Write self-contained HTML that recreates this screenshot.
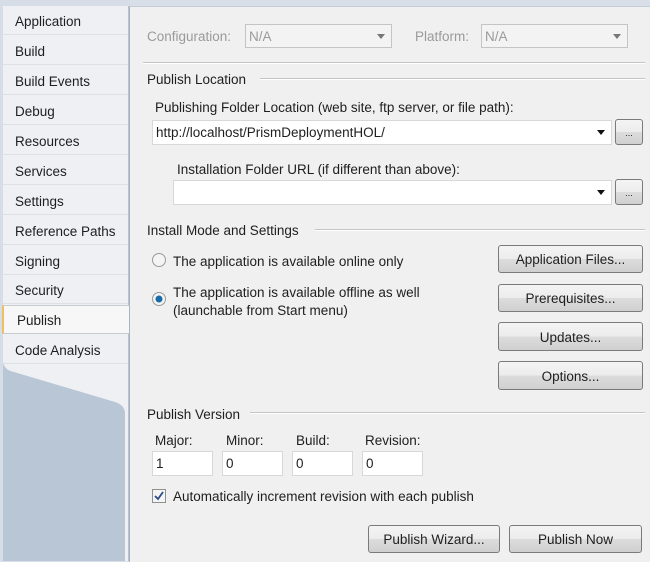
<!DOCTYPE html>
<html><head><style>
body{margin:0;width:650px;height:561px;overflow:hidden;background:#d9dfe8;font-family:"Liberation Sans",sans-serif;font-size:13.5px;color:#1e1e1e;position:relative}
.a{position:absolute;white-space:nowrap}
.tab{position:absolute;left:3px;width:125px;height:29px;border-bottom:1px solid #dde0e5;line-height:31px;padding-left:12px;box-sizing:border-box}
.panel{position:absolute;left:129px;top:6px;width:521px;height:555px;background:#f0f0f0;border-left:1px solid #a8b4c4;border-top:1px solid #c4ccd6}
.line{position:absolute;height:1px;background:#c4c4c4;border-bottom:1px solid #fff}
.box{position:absolute;background:#fff;border:1px solid #d8d8d8;box-sizing:border-box;line-height:24px;padding-left:3px}
.btn{position:absolute;border:1px solid #7a7a7a;border-radius:3px;background:linear-gradient(#f4f4f4,#ececec 50%,#dcdcdc 51%,#d0d0d0);box-sizing:border-box;text-align:center;font-size:13.5px}
.arr{position:absolute;right:6px;top:9px;width:0;height:0;border-left:4.5px solid transparent;border-right:4.5px solid transparent;border-top:5px solid #111}
.dis{color:#9a9a9a}
.t{margin-top:1px}
</style></head><body>
<svg class="a" style="left:0;top:0" width="130" height="561">
<rect x="0" y="0" width="130" height="561" fill="#d7dde6"/>
<path d="M3 6 H128 V561 H3 Z" fill="#eef0f4"/>
<path d="M3 362 Q4 370 14 372 L115 402 Q125 405 125 414 V561 H3 Z" fill="#b9c6d6"/>
<line x1="128.5" y1="6" x2="128.5" y2="561" stroke="#b8c2d0"/>
</svg>
<div class="tab" style="top:6px">Application</div>
<div class="tab" style="top:36px">Build</div>
<div class="tab" style="top:66px">Build Events</div>
<div class="tab" style="top:96px">Debug</div>
<div class="tab" style="top:126px">Resources</div>
<div class="tab" style="top:156px">Services</div>
<div class="tab" style="top:186px">Settings</div>
<div class="tab" style="top:216px">Reference Paths</div>
<div class="tab" style="top:246px">Signing</div>
<div class="tab" style="top:275px">Security</div>
<div class="tab" style="top:305px;left:2px;width:127px;background:#f7f7f7;border-left:2px solid #f0c060;border-bottom:1px solid #c8ccd2;border-top:1px solid #c8ccd2;padding-left:13px;line-height:29px">Publish</div>
<div class="tab" style="top:335px">Code Analysis</div>
<div class="panel"></div>
<div class="a dis" style="left:147px;top:29px">Configuration:</div>
<div class="box dis" style="left:245px;top:24px;width:147px;height:24px;border-color:#c4c4c4;background:#f3f3f3;line-height:23px">N/A<div class="arr" style="border-top-color:#777"></div></div>
<div class="a dis" style="left:415px;top:29px">Platform:</div>
<div class="box dis" style="left:481px;top:24px;width:147px;height:24px;border-color:#c4c4c4;background:#f3f3f3;line-height:23px">N/A<div class="arr" style="border-top-color:#777"></div></div>
<div class="line" style="left:143px;top:62px;width:502px"></div>
<div class="a" style="left:147px;top:72px">Publish Location</div>
<div class="line" style="left:260px;top:78px;width:385px"></div>
<div class="a" style="left:155px;top:100px">Publishing Folder Location (web site, ftp server, or file path):</div>
<div class="box" style="left:152px;top:120px;width:460px;height:25px">http://localhost/PrismDeploymentHOL/<div class="arr"></div></div>
<div class="btn" style="left:615px;top:119px;width:28px;height:26px;font-size:9px;line-height:26px">...</div>
<div class="a" style="left:177px;top:162px">Installation Folder URL (if different than above):</div>
<div class="box" style="left:173px;top:180px;width:439px;height:25px"><div class="arr"></div></div>
<div class="btn" style="left:615px;top:179px;width:28px;height:26px;font-size:9px;line-height:26px">...</div>
<div class="a" style="left:147px;top:223px">Install Mode and Settings</div>
<div class="line" style="left:315px;top:229px;width:330px"></div>
<svg class="a" style="left:151px;top:252px" width="16" height="16"><circle cx="8" cy="8" r="6.5" fill="#f4f4f4" stroke="#9a9a9a"/></svg>
<div class="a" style="left:173px;top:254px">The application is available online only</div>
<svg class="a" style="left:151px;top:291px" width="16" height="16"><circle cx="8" cy="8" r="6.5" fill="#f4f4f4" stroke="#9a9a9a"/><circle cx="8" cy="8" r="3.5" fill="#1a6aa8"/></svg>
<div class="a" style="left:173px;top:284px;line-height:18px">The application is available offline as well<br>(launchable from Start menu)</div>
<div class="btn" style="left:498px;top:245px;width:145px;height:28px;line-height:28px">Application Files...</div>
<div class="btn" style="left:498px;top:284px;width:145px;height:28px;line-height:28px">Prerequisites...</div>
<div class="btn" style="left:498px;top:322px;width:145px;height:29px;line-height:29px">Updates...</div>
<div class="btn" style="left:498px;top:361px;width:145px;height:29px;line-height:29px">Options...</div>
<div class="a" style="left:147px;top:407px">Publish Version</div>
<div class="line" style="left:250px;top:412px;width:395px"></div>
<div class="a" style="left:155px;top:433px">Major:</div>
<div class="a" style="left:226px;top:433px">Minor:</div>
<div class="a" style="left:296px;top:433px">Build:</div>
<div class="a" style="left:365px;top:433px">Revision:</div>
<div class="box" style="left:152px;top:451px;width:61px;height:25px">1</div>
<div class="box" style="left:222px;top:451px;width:61px;height:25px">0</div>
<div class="box" style="left:292px;top:451px;width:61px;height:25px">0</div>
<div class="box" style="left:362px;top:451px;width:61px;height:25px">0</div>
<svg class="a" style="left:151px;top:488px" width="16" height="16"><rect x="1.5" y="1.5" width="13" height="13" fill="#f4f4f4" stroke="#8e8f8f"/><path d="M4 8 L7 11 L12 4" stroke="#2a4a8a" stroke-width="1.8" fill="none"/></svg>
<div class="a" style="left:173px;top:489px">Automatically increment revision with each publish</div>
<div class="btn" style="left:368px;top:525px;width:132px;height:28px;line-height:28px">Publish Wizard...</div>
<div class="btn" style="left:509px;top:525px;width:133px;height:28px;line-height:28px">Publish Now</div>
</body></html>
